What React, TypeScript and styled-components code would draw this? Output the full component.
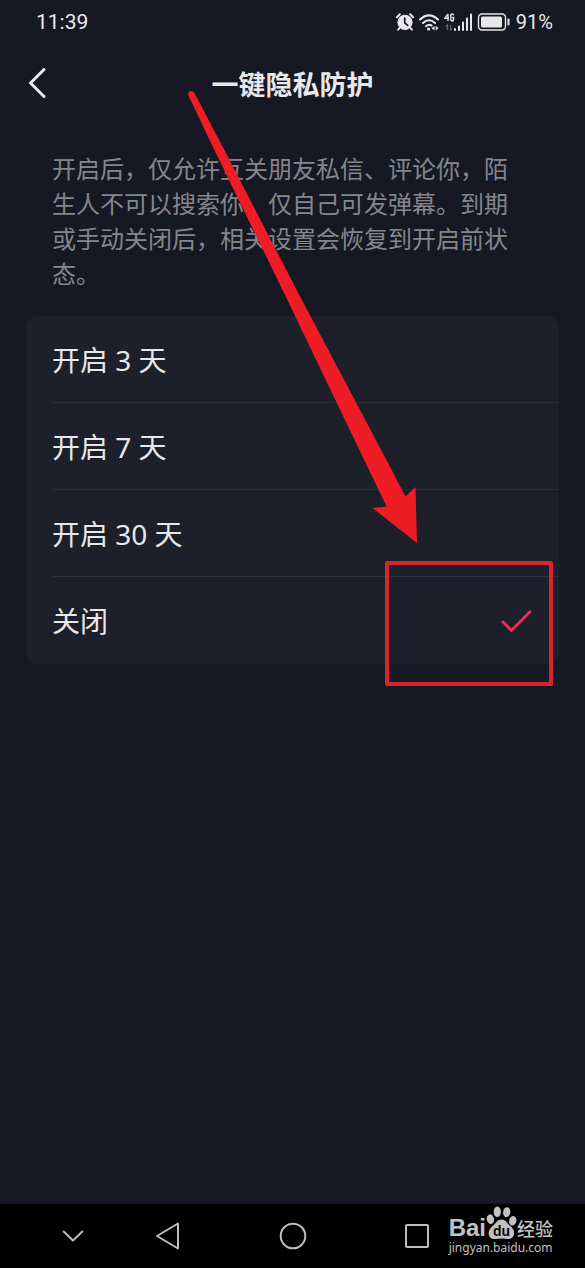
import React, { useState } from 'react';
import styled, { createGlobalStyle } from 'styled-components';

const GlobalStyle = createGlobalStyle`
  * { box-sizing: border-box; }
  body {
    margin: 0;
    background: #161823;
    color: #e8e8ea;
    font-family: "Noto Sans", "Noto Sans CJK SC", sans-serif;
  }
  button { padding: 0; border: 0; background: none; color: inherit; cursor: pointer; }
`;

const Page = styled.div`
  position: relative;
  display: flex;
  flex-direction: column;
  min-height: 100vh;
`;

const StatusBar = styled.div`
  display: flex;
  align-items: center;
  justify-content: space-between;
  height: 44px;
  padding: 0 32px 0 36px;
  font-family: Roboto, sans-serif;
`;

const Clock = styled.time`
  font-size: 21px;
  line-height: 24px;
`;

const StatusIcons = styled.div`
  display: flex;
  align-items: center;
  gap: 5px;
  font-size: 20px;
  line-height: 24px;
`;

const Header = styled.header`
  display: grid;
  grid-template-columns: 48px 1fr 48px;
  align-items: center;
  height: 80px;
  padding: 0 14px;
`;

const BackButton = styled.button`
  display: flex;
  align-items: center;
  justify-content: center;
  height: 48px;
`;

const Title = styled.h1`
  margin: 0;
  text-align: center;
  font: 700 27px/40px "Noto Sans CJK SC", sans-serif;
`;

const Main = styled.main`
  flex: 1;
  padding: 26px 26px;
`;

const Description = styled.p`
  margin: 0 0 26px;
  padding: 0 40px 0 26px;
  font: 400 24px/35px "Noto Sans CJK SC", sans-serif;
  color: #85868d;
`;

const OptionCard = styled.fieldset`
  margin: 0;
  padding: 0 0 0 26px;
  border: 0;
  border-radius: 12px;
  background: #1d1f2a;
`;

const Option = styled.label`
  display: flex;
  align-items: center;
  justify-content: space-between;
  height: 87px;
  padding: 2px 27px 0 0;
  border-bottom: 1px solid #2c2e38;
  font-size: 28px;
  line-height: 40px;
  cursor: pointer;
  &:last-child { border-bottom-color: transparent; }
`;

const Radio = styled.input`
  appearance: none;
  width: 0;
  height: 0;
  margin: 0;
  & ~ svg { visibility: hidden; }
  &:checked ~ svg { visibility: visible; }
`;

const OptionText = styled.span`
  flex: 1;
`;

const NavBar = styled.nav`
  display: grid;
  grid-template-columns: 66fr 124fr 125fr 124fr 106fr;
  align-items: center;
  justify-items: center;
  height: 64px;
  padding-left: 40px;
  background: #000;
`;

const NavButton = styled.button`
  display: flex;
  align-items: center;
  justify-content: center;
  width: 40px;
  height: 40px;
`;

const Arrow = styled.svg`
  position: absolute;
  top: 88px;
  right: 165px;
  pointer-events: none;
`;

const Highlight = styled.div`
  position: absolute;
  top: 561px;
  right: 32px;
  width: 168px;
  height: 125px;
  border: 4px solid #d8252f;
  border-radius: 2px;
  pointer-events: none;
`;

const Watermark = styled.div`
  position: absolute;
  right: 32px;
  bottom: 12px;
  color: #c2c2c2;
  pointer-events: none;
`;

const Brand = styled.div`
  display: flex;
  align-items: flex-end;
  height: 34px;
`;

const BrandLatin = styled.span`
  font: 700 24px/24px "Liberation Sans", sans-serif;
`;

const BrandChinese = styled.span`
  font: 500 18px/24px "Noto Sans CJK SC", sans-serif;
`;

const Site = styled.div`
  font: 400 12px/16px "Noto Sans", sans-serif;
`;

const AlarmIcon = () => (
  <svg width="18" height="18" viewBox="0 0 18 18" fill="none" aria-hidden="true">
    <circle cx="9" cy="9.3" r="7.6" fill="#e8e8ea" />
    <path d="M1 4.2 3.8 1.3M17 4.2 14.2 1.3M3.5 15 2.2 16.7M14.5 15 15.8 16.7" stroke="#e8e8ea" strokeWidth="2" strokeLinecap="round" />
    <path d="M8.7 5.2v4.6l3 2.6" stroke="#161823" strokeWidth="1.7" strokeLinecap="round" strokeLinejoin="round" />
  </svg>
);

const WifiIcon = () => (
  <svg width="20" height="18" viewBox="0 0 20 18" fill="none" aria-hidden="true">
    <path d="M1 6.5Q10-1.8 19 6.5M4 10Q10 4.6 16 10M7 13.2Q10 10.8 12.5 12.6" stroke="#e8e8ea" strokeWidth="2" strokeLinecap="round" />
    <circle cx="9.6" cy="16" r="1.6" fill="#e8e8ea" />
    <path d="m15.5 12.8-2.8 2.4 2.8 2.4zM16.7 12.8l2.8 2.4-2.8 2.4z" fill="#e8e8ea" />
  </svg>
);

const SignalIcon = () => (
  <svg width="28" height="18" viewBox="0 0 28 18" fill="none" aria-hidden="true">
    <path d="M3.6 1 1 5.3h4M4 1v7M9.5 2.4Q9.4 1 8.2 1 6.8 1 6.8 2.5v4Q6.8 8 8.2 8 9.5 8 9.5 6.5v-2H8.2" stroke="#e8e8ea" strokeWidth="1.4" />
    <path d="M3.5 17v-5L1.8 13.5M6.5 12v5l1.7-1.5" stroke="#62646d" strokeWidth="1.3" />
    <path d="M11 16v1M15 13.5V17M19 9.5V17M23 5.5V17M27 1.5V17" stroke="#e8e8ea" strokeWidth="2" strokeLinecap="round" />
  </svg>
);

const BatteryIcon = () => (
  <svg width="34" height="18" viewBox="0 0 34 18" fill="none" aria-hidden="true">
    <rect x="1.5" y="1" width="27" height="16" rx="3.5" stroke="#e8e8ea" strokeWidth="1.4" />
    <rect x="4" y="3.5" width="21" height="11" rx="1.5" fill="#e8e8ea" />
    <path d="M31.5 6.5v5" stroke="#e8e8ea" strokeWidth="2" strokeLinecap="round" />
  </svg>
);

const PawIcon = () => (
  <svg width="31" height="34" viewBox="0 0 31 34" fill="#c2c2c2" aria-hidden="true">
    <ellipse cx="4.4" cy="13.2" rx="3.6" ry="4.9" transform="rotate(-12 4.4 13.2)" />
    <ellipse cx="11.3" cy="5.8" rx="3.6" ry="5.2" />
    <ellipse cx="20.7" cy="6.2" rx="3.6" ry="5" transform="rotate(8 20.7 6.2)" />
    <ellipse cx="26.8" cy="14.8" rx="3.6" ry="4.8" transform="rotate(15 26.8 14.8)" />
    <path d="M15.5 13.5C19.5 13.5 21 17 23.5 19.3 26 21.5 28.5 23.5 28 28 27.5 32 24.5 33.5 21.5 33 17.5 32.3 14 32.3 10 33 6 33.6 3 31.7 2.7 28 2.4 23.8 5 21.5 7.5 19.3 10 17 11.5 13.5 15.5 13.5Z" />
    <text x="15.5" y="30" textAnchor="middle" fill="#000" fontFamily="Liberation Sans, sans-serif" fontWeight="700" fontSize="14">du</text>
  </svg>
);

const options = ['开启 3 天', '开启 7 天', '开启 30 天', '关闭'];

export default function App() {
  const [selected, setSelected] = useState('关闭');
  return (
    <>
      <GlobalStyle />
      <Page>
        <StatusBar>
          <Clock>11:39</Clock>
          <StatusIcons>
            <AlarmIcon />
            <WifiIcon />
            <SignalIcon />
            <BatteryIcon />
            <span>91%</span>
          </StatusIcons>
        </StatusBar>
        <Header>
          <BackButton aria-label="返回">
            <svg width="20" height="32" viewBox="0 0 20 32" fill="none">
              <path d="M16 1.5 2.5 15 16 28.5" stroke="#e8e8ea" strokeWidth="3" strokeLinecap="round" strokeLinejoin="round" />
            </svg>
          </BackButton>
          <Title>一键隐私防护</Title>
        </Header>
        <Main>
          <Description>
            开启后，仅允许互关朋友私信、评论你，陌生人不可以搜索你，仅自己可发弹幕。到期或手动关闭后，相关设置会恢复到开启前状态。
          </Description>
          <OptionCard aria-label="一键隐私防护">
            {options.map((name) => (
              <Option key={name}>
                <Radio type="radio" name="protection" checked={selected === name} onChange={() => setSelected(name)} />
                <OptionText>{name}</OptionText>
                <svg width="32" height="24" viewBox="0 0 32 24" fill="none" aria-hidden="true">
                  <path d="m3 13 8.5 8.5L30 2.8" stroke="#e8315b" strokeWidth="2.8" strokeLinecap="round" strokeLinejoin="round" />
                </svg>
              </Option>
            ))}
          </OptionCard>
        </Main>
        <NavBar>
          <NavButton aria-label="收起">
            <svg width="24" height="16" viewBox="0 0 24 16" fill="none">
              <path d="m2.7 3.5 9.3 9 9.3-9" stroke="#bdbdbd" strokeWidth="2" strokeLinecap="round" strokeLinejoin="round" />
            </svg>
          </NavButton>
          <NavButton aria-label="后退">
            <svg width="26" height="28" viewBox="0 0 26 28" fill="none">
              <path d="M23 1.5v25L2 14Z" stroke="#bdbdbd" strokeWidth="2" strokeLinejoin="round" />
            </svg>
          </NavButton>
          <NavButton aria-label="主页">
            <svg width="28" height="28" viewBox="0 0 28 28" fill="none">
              <circle cx="14" cy="14" r="12.3" stroke="#bdbdbd" strokeWidth="2" />
            </svg>
          </NavButton>
          <NavButton aria-label="最近任务">
            <svg width="26" height="26" viewBox="0 0 26 26" fill="none">
              <rect x="2" y="2" width="22" height="22" rx="1" stroke="#bdbdbd" strokeWidth="2" />
            </svg>
          </NavButton>
        </NavBar>
        <Arrow width="235" height="460" viewBox="185 88 235 460" aria-hidden="true">
          <path d="M188.2 95.2Q187.8 91.5 191 91 193.2 90.8 194.5 93L221.7 145 299.3 295 391.7 470 405.5 496.5 415.5 487 417 543 372.5 508 386.7 506.5 369 470 285 295 212 145Z" fill="#ee1c24" />
        </Arrow>
        <Highlight />
        <Watermark>
          <Brand>
            <BrandLatin>Bai</BrandLatin>
            <PawIcon />
            <BrandChinese>经验</BrandChinese>
          </Brand>
          <Site>jingyan.baidu.com</Site>
        </Watermark>
      </Page>
    </>
  );
}
